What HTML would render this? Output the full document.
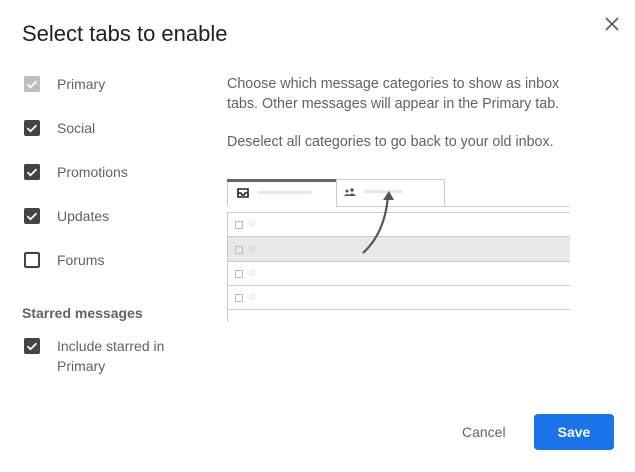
<!DOCTYPE html>
<html><head><style>
body{margin:0;width:635px;height:472px;background:#fff;font-family:"Liberation Sans",Arial,sans-serif;position:relative;overflow:hidden}
.a{position:absolute}
.t{color:#202124;font-size:22px;left:22px;top:21px}
.cb{position:absolute;left:24px;width:16px;height:16px;border-radius:2px;background:#444}
.cb svg{position:absolute;left:0;top:0}
.lb{position:absolute;left:57px;font-size:14px;color:#5f6368}
.p{font-size:14.3px;color:#5f6368;line-height:20px}
.star{position:absolute;left:248px;font-size:10px;color:#bbb}
.sq{position:absolute;left:235px;width:6px;height:6px;border:1px solid #bbb}
</style></head><body>
<div class="a t">Select tabs to enable</div>
<svg class="a" style="left:604px;top:16px" width="16" height="16"><path d="M2 2L14 14M14 2L2 14" stroke="#5f6368" stroke-width="1.8"/></svg>

<div class="cb" style="top:76px;background:#bdbdbd"><svg width="16" height="16"><path d="M3.5 8.2l3 3 6-6" stroke="#fff" stroke-width="1.8" fill="none"/></svg></div>
<div class="lb" style="top:76px">Primary</div>
<div class="cb" style="top:120px"><svg width="16" height="16"><path d="M3.5 8.2l3 3 6-6" stroke="#fff" stroke-width="1.8" fill="none"/></svg></div>
<div class="lb" style="top:120px">Social</div>
<div class="cb" style="top:164px"><svg width="16" height="16"><path d="M3.5 8.2l3 3 6-6" stroke="#fff" stroke-width="1.8" fill="none"/></svg></div>
<div class="lb" style="top:164px">Promotions</div>
<div class="cb" style="top:208px"><svg width="16" height="16"><path d="M3.5 8.2l3 3 6-6" stroke="#fff" stroke-width="1.8" fill="none"/></svg></div>
<div class="lb" style="top:208px">Updates</div>
<div class="cb" style="top:252px;background:#fff;border:2px solid #444;width:12px;height:12px"></div>
<div class="lb" style="top:252px">Forums</div>
<div class="a" style="left:22px;top:305px;font-size:14px;font-weight:bold;color:#5f6368">Starred messages</div>
<div class="cb" style="top:338px"><svg width="16" height="16"><path d="M3.5 8.2l3 3 6-6" stroke="#fff" stroke-width="1.8" fill="none"/></svg></div>
<div class="lb" style="top:336px;line-height:20px">Include starred in<br>Primary</div>

<div class="a p" style="left:227px;top:74px">Choose which message categories to show as inbox<br>tabs. Other messages will appear in the Primary tab.</div>
<div class="a p" style="left:227px;top:132px">Deselect all categories to go back to your old inbox.</div>

<div class="a" style="left:227px;top:179px;width:109px;height:3px;background:#666"></div>
<div class="a" style="left:336px;top:179px;width:107px;height:27px;border:1px solid #ccc;border-bottom:none"></div>
<div class="a" style="left:227px;top:182px;width:1px;height:24px;background:#ccc"></div>
<div class="a" style="left:336px;top:206px;width:234px;height:1px;background:#ccc"></div>
<svg class="a" style="left:237px;top:188px" width="12" height="10"><path d="M1 1h10v8H1z M1 5h3l1 2h2l1-2h3" stroke="#222" stroke-width="1.6" fill="none"/></svg>
<div class="a" style="left:258px;top:191px;width:53px;height:3px;background:#e6e6e6"></div>
<div class="a" style="left:364px;top:190px;width:38px;height:3px;background:#e6e6e6"></div>
<svg class="a" style="left:344px;top:188px" width="12" height="8"><circle cx="3" cy="3" r="1.5" fill="#555"/><circle cx="8" cy="2" r="1.7" fill="#555"/><path d="M0 8q3-4 6 0zM4 8q4-5 8 0z" fill="#555"/></svg>

<div class="a" style="left:227px;top:212px;width:343px;height:1px;background:#ccc"></div>
<div class="a" style="left:227px;top:237px;width:343px;height:24px;background:#e8e8e8"></div>
<div class="a" style="left:227px;top:236px;width:343px;height:1px;background:#ccc"></div>
<div class="a" style="left:227px;top:261px;width:343px;height:1px;background:#ccc"></div>
<div class="a" style="left:227px;top:285px;width:343px;height:1px;background:#ccc"></div>
<div class="a" style="left:227px;top:309px;width:343px;height:1px;background:#ccc"></div>
<div class="a" style="left:227px;top:212px;width:1px;height:110px;background:#ccc"></div>
<div class="sq" style="top:221px"></div><div class="star" style="top:219px">☆</div>
<div class="sq" style="top:246px"></div><div class="star" style="top:244px">☆</div>
<div class="sq" style="top:270px"></div><div class="star" style="top:268px">☆</div>
<div class="sq" style="top:294px"></div><div class="star" style="top:292px">☆</div>
<svg class="a" style="left:355px;top:188px" width="40" height="70"><path d="M8 65Q30 45 33 8" stroke="#555" stroke-width="2.2" fill="none"/><path d="M28 12L34 3L39 12z" fill="#555"/></svg>

<div class="a" style="left:462px;top:424px;font-size:14px;color:#5f6368">Cancel</div>
<div class="a" style="left:534px;top:414px;width:80px;height:36px;background:#1a73e8;border-radius:4px;color:#fff;font-size:14px;font-weight:bold;text-align:center;line-height:36px">Save</div>
</body></html>
